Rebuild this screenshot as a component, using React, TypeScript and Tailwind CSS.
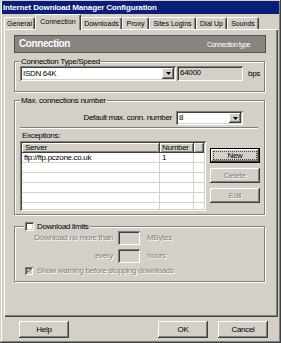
import React from "react";

const raised =
  "shadow-[inset_-1px_-1px_0_#404040,inset_1px_1px_0_#ffffff,inset_-2px_-2px_0_#808080,inset_2px_2px_0_#d4d0c8]";
const sunken =
  "shadow-[inset_1px_1px_0_#808080,inset_-1px_-1px_0_#ffffff,inset_2px_2px_0_#404040,inset_-2px_-2px_0_#d4d0c8]";
const disabledText = "text-[#808080] [text-shadow:1px_1px_0_#ffffff]";

function Arrow() {
  return (
    <svg width="5" height="3" viewBox="0 0 5 3">
      <polygon points="0,0 5,0 2.5,3" fill="#000" />
    </svg>
  );
}

function Combo({ value, cls }: { value: string; cls: string }) {
  return (
    <div className={"flex p-[2px] bg-white " + sunken + " " + cls}>
      <div className="flex-1 pl-[1px] flex items-center leading-none">{value}</div>
      <div className={"w-[12px] h-full bg-[#d4d0c8] flex items-center justify-center " + raised}>
        <Arrow />
      </div>
    </div>
  );
}

function Group({ label, cls, children }: { label: React.ReactNode; cls: string; children: React.ReactNode }) {
  return (
    <div
      className={
        "ml-[10px] w-[251px] border border-[#808080] shadow-[inset_1px_1px_0_#ffffff,1px_1px_0_#ffffff] flex flex-col " +
        cls
      }
    >
      {label}
      {children}
    </div>
  );
}

function Btn({ children, cls, disabled }: { children: React.ReactNode; cls: string; disabled?: boolean }) {
  return (
    <div className={"w-[50px] flex items-center justify-center leading-none bg-[#d4d0c8] " + raised + " " + cls}>
      <span className={disabled ? disabledText : ""}>{children}</span>
    </div>
  );
}

const tabs: { name: string; w: string }[] = [
  { name: "General", w: "w-[31px]" },
  { name: "Connection", w: "w-[46px]" },
  { name: "Downloads", w: "w-[41px]" },
  { name: "Proxy", w: "w-[27px]" },
  { name: "Sites Logins", w: "w-[47px]" },
  { name: "Dial Up", w: "w-[31px]" },
  { name: "Sounds", w: "w-[32px]" },
];

export default function App() {
  const rows = [0, 1, 2, 3, 4, 5];
  return (
    <div className="w-[281px] h-[343px] bg-[#d4d0c8] flex flex-col overflow-hidden text-black text-[8px] tracking-[-0.3px] [font-family:'Liberation_Sans',Arial,sans-serif] shadow-[inset_-1px_-1px_0_#404040,inset_1px_1px_0_#d4d0c8,inset_-2px_-2px_0_#808080,inset_2px_2px_0_#ffffff]">
      {/* Title bar */}
      <div className="mx-[2px] mt-[1px] h-[13px] bg-[#0a1e78] text-white text-[8px] font-bold tracking-[-0.15px] leading-[13px] pl-[1px] whitespace-nowrap">
        Internet Download Manager Configuration
      </div>

      {/* Tabs */}
      <div className="flex items-end h-[15px] pl-[4px] relative z-10 text-[7px] tracking-[0px]">
        {tabs.map((t) =>
          t.name === "Connection" ? (
            <div
              key={t.name}
              className={
                t.w +
                " h-[16px] -mb-[1px] relative z-10 bg-[#d4d0c8] border-l border-t border-white border-r border-r-[#404040] shadow-[inset_-1px_0_0_#808080] rounded-t-[2px] text-center leading-[11px] pt-[1px] whitespace-nowrap"
              }
            >
              {t.name}
            </div>
          ) : (
            <div
              key={t.name}
              className={
                t.w +
                " h-[12px] border-l border-t border-white border-r border-r-[#404040] shadow-[inset_-1px_0_0_#808080] rounded-t-[2px] text-center leading-[11px] whitespace-nowrap"
              }
            >
              {t.name}
            </div>
          )
        )}
      </div>

      {/* Panel */}
      <div className="ml-[4px] w-[274px] h-[288px] flex flex-col shadow-[inset_1px_1px_0_#ffffff,inset_-1px_-1px_0_#404040,inset_-2px_-2px_0_#808080]">
        {/* Header */}
        <div className="ml-[10px] mt-[6px] w-[252px] h-[18px] shrink-0 bg-[#88847f] border border-[#55524f] flex items-center justify-between pl-[4px] pr-[15px] text-white">
          <span className="text-[10px] font-bold tracking-[-0.4px] leading-none">Connection</span>
          <span className="text-[7px] tracking-[-0.5px] leading-none">Connection type</span>
        </div>

        {/* Group 1 */}
        <Group
          cls="mt-[8px] h-[31px] shrink-0"
          label={
            <div className="-mt-[5px] ml-[5px] self-start px-[1px] h-[9px] leading-[9px] bg-[#d4d0c8] whitespace-nowrap">
              Connection Type/Speed
            </div>
          }
        >
          <div className="flex items-center ml-[5px] h-[15px]">
            <Combo value="ISDN 64K" cls="w-[156px] h-[15px]" />
            <div className={"ml-[1px] w-[66px] h-[15px] bg-[#d4d0c8] pl-[3px] pt-[3px] leading-none " + sunken}>64000</div>
            <span className="ml-[5px]">bps</span>
          </div>
        </Group>

        {/* Group 2 */}
        <Group
          cls="mt-[8px] h-[115px] shrink-0"
          label={
            <div className="-mt-[5px] ml-[5px] self-start px-[1px] h-[9px] leading-[9px] bg-[#d4d0c8] whitespace-nowrap">
              Max. connections number
            </div>
          }
        >
          <div className="flex items-center justify-end pr-[21px] gap-[4px] h-[14px] mt-[6px]">
            <span className="whitespace-nowrap">Default max. conn. number</span>
            <Combo value="8" cls="w-[67px] h-[14px]" />
          </div>
          <div className="mt-[2px] ml-[5px] w-[238px] h-[2px] border-t border-[#808080] border-b border-b-white" />
          <div className="mt-[2px] ml-[7px] h-[9px] leading-[9px]">Exceptions:</div>
          <div className="mt-[1px] ml-[5px] flex">
            <div className={"w-[186px] h-[70px] p-[2px] " + sunken}>
              <div className="w-full h-full bg-white overflow-hidden flex flex-col">
                <div className="flex h-[10px] shrink-0">
                  <div className={"w-[138px] h-full bg-[#d4d0c8] pl-[3px] leading-[10px] " + raised}>Server</div>
                  <div className={"w-[34px] h-full bg-[#d4d0c8] pl-[2px] leading-[10px] " + raised}>Number</div>
                  <div className={"flex-1 h-full bg-[#d4d0c8] " + raised} />
                </div>
                {rows.map((r) => (
                  <div key={r} className="flex h-[10px] shrink-0 border-b border-[#d4d0c8]">
                    <div className="w-[138px] h-full border-r border-[#d4d0c8] pl-[2px] leading-[10px] whitespace-nowrap">
                      {r === 0 ? "ftp://ftp.pczone.co.uk" : ""}
                    </div>
                    <div className="w-[34px] h-full border-r border-[#d4d0c8] pl-[2px] leading-[10px]">
                      {r === 0 ? "1" : ""}
                    </div>
                    <div className="flex-1 h-full" />
                  </div>
                ))}
              </div>
            </div>
            <div className="ml-[4px] mt-[7px] flex flex-col gap-[5px]">
              <div className="w-[50px] h-[15px] border border-black">
                <div className={"w-full h-full p-[2px] bg-[#d4d0c8] " + raised}>
                  <div className="w-full h-full border border-dotted border-[#404040] flex items-center justify-center leading-none">
                    New
                  </div>
                </div>
              </div>
              <Btn cls="h-[15px]" disabled>
                Delete
              </Btn>
              <Btn cls="h-[15px]" disabled>
                Edit
              </Btn>
            </div>
          </div>
        </Group>

        {/* Group 3 */}
        <Group
          cls="mt-[11px] h-[56px] shrink-0"
          label={
            <div className="-mt-[5px] ml-[9px] self-start px-[1px] h-[9px] bg-[#d4d0c8] flex items-center gap-[3px] whitespace-nowrap">
              <div className={"w-[9px] h-[9px] bg-white " + sunken} />
              <span className="leading-none">Download limits</span>
            </div>
          }
        >
          <div className="flex items-center h-[14px]">
            <div className={"w-[98px] text-right whitespace-nowrap " + disabledText}>Download no more than</div>
            <div className={"ml-[5px] w-[22px] h-[14px] bg-[#d4d0c8] " + sunken} />
            <span className={"ml-[7px] " + disabledText}>MBytes</span>
          </div>
          <div className="flex items-center h-[14px] mt-[4px]">
            <div className={"w-[98px] text-right " + disabledText}>every</div>
            <div className={"ml-[5px] w-[22px] h-[14px] bg-[#d4d0c8] " + sunken} />
            <span className={"ml-[7px] " + disabledText}>hours</span>
          </div>
          <div className="flex items-center h-[9px] mt-[3px] ml-[10px] gap-[4px]">
            <div className={"w-[8px] h-[8px] bg-[#d4d0c8] flex items-center justify-center " + sunken}>
              <svg width="6" height="5" viewBox="0 0 6 5">
                <polyline points="0.5,2.2 2.2,4 5.5,0.6" fill="none" stroke="#808080" strokeWidth="1.2" />
              </svg>
            </div>
            <span className={"whitespace-nowrap " + disabledText}>Show warning before stopping downloads</span>
          </div>
        </Group>
      </div>

      {/* Bottom buttons */}
      <div className="mt-[4px] flex h-[17px]">
        <Btn cls="ml-[19px] h-[17px]">Help</Btn>
        <Btn cls="ml-[89px] h-[17px]">OK</Btn>
        <Btn cls="ml-[10px] h-[17px]">Cancel</Btn>
      </div>
    </div>
  );
}
